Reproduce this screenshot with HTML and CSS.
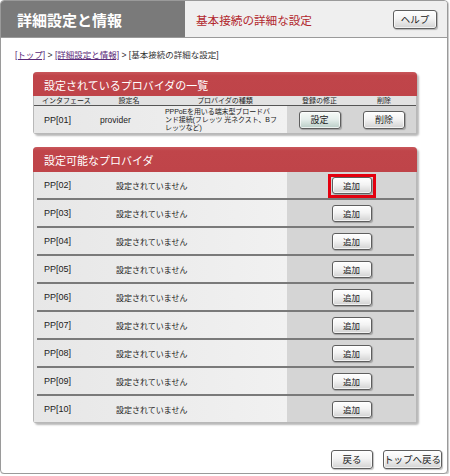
FILE: index.html
```html
<!DOCTYPE html>
<html lang="ja">
<head>
<meta charset="utf-8">
<link rel="stylesheet" href="styles.css">
</head>
<body>
<div class="frame">
  <div class="header">
    <div class="h-title">詳細設定と情報</div>
    <div class="h-sub">
      <span class="sub-text">基本接続の詳細な設定</span>
      <button class="btn help">ヘルプ</button>
    </div>
  </div>

  <div class="crumbs"><a class="lnk">[トップ]</a> &gt; <a class="lnk">[詳細設定と情報]</a> &gt; [基本接続の詳細な設定]</div>

  <section class="panel p1">
    <div class="panel-head">設定されているプロバイダの一覧</div>
    <div class="g1 head-row">
      <div class="hc hc-if">インタフェース</div>
      <div class="hc">設定名</div>
      <div class="hc">プロバイダの種類</div>
      <div class="hc">登録の修正</div>
      <div class="hc">削除</div>
    </div>
    <div class="g1 data-row">
      <div class="dc dc-if">PP[01]</div>
      <div class="dc dc-name">provider</div>
      <div class="dc dc-type">PPPoEを用いる端末型ブロードバ<br>ンド接続(フレッツ 光ネクスト、Bフ<br>レッツなど)</div>
      <div class="dc dc-act"><button class="btn b-mid b-green">設定</button></div>
      <div class="dc dc-act"><button class="btn b-mid">削除</button></div>
    </div>
  </section>

  <section class="panel p2">
    <div class="panel-head">設定可能なプロバイダ</div>
    <div class="row"><div class="r-if">PP[02]</div><div class="r-name">設定されていません</div><div class="r-act"><span class="focus"><button class="btn b-add">追加</button></span></div></div>
    <div class="sep"></div>
    <div class="row"><div class="r-if">PP[03]</div><div class="r-name">設定されていません</div><div class="r-act"><button class="btn b-add">追加</button></div></div>
    <div class="sep"></div>
    <div class="row"><div class="r-if">PP[04]</div><div class="r-name">設定されていません</div><div class="r-act"><button class="btn b-add">追加</button></div></div>
    <div class="sep"></div>
    <div class="row"><div class="r-if">PP[05]</div><div class="r-name">設定されていません</div><div class="r-act"><button class="btn b-add">追加</button></div></div>
    <div class="sep"></div>
    <div class="row"><div class="r-if">PP[06]</div><div class="r-name">設定されていません</div><div class="r-act"><button class="btn b-add">追加</button></div></div>
    <div class="sep"></div>
    <div class="row"><div class="r-if">PP[07]</div><div class="r-name">設定されていません</div><div class="r-act"><button class="btn b-add">追加</button></div></div>
    <div class="sep"></div>
    <div class="row"><div class="r-if">PP[08]</div><div class="r-name">設定されていません</div><div class="r-act"><button class="btn b-add">追加</button></div></div>
    <div class="sep"></div>
    <div class="row"><div class="r-if">PP[09]</div><div class="r-name">設定されていません</div><div class="r-act"><button class="btn b-add">追加</button></div></div>
    <div class="sep"></div>
    <div class="row"><div class="r-if">PP[10]</div><div class="r-name">設定されていません</div><div class="r-act"><button class="btn b-add">追加</button></div></div>
  </section>

  <div class="footer">
    <button class="btn b-back">戻る</button>
    <button class="btn b-top">トップへ戻る</button>
  </div>
</div>
</body>
</html>
```

FILE: styles.css
```css
* { box-sizing: border-box; }
html, body { margin: 0; padding: 0; background: #ffffff; }
body {
  font-family: "Liberation Sans", "Noto Sans CJK JP", sans-serif;
  color: #222;
}

.frame {
  width: 448px;
  height: 474px;
  border: 1px solid #9a9a9a;
  border-radius: 4px;
  box-shadow: 1px 1px 1px #c8c8c8;
  display: flex;
  flex-direction: column;
  overflow: hidden;
  background: #ffffff;
}

/* Header */
.header {
  display: flex;
  height: 37px;
  border-bottom: 1px solid #9a9a9a;
  flex-shrink: 0;
}
.h-title {
  width: 184px;
  background: #7a7a7a;
  color: #ffffff;
  font-family: "Noto Sans CJK JP", sans-serif;
  font-weight: 700;
  font-size: 15px;
  padding-left: 16px;
  display: flex;
  align-items: center;
  letter-spacing: 0;
}
.h-sub {
  flex: 1;
  background: #efefef;
  display: flex;
  align-items: center;
  justify-content: space-between;
  padding-left: 11px;
  padding-right: 10px;
}
.sub-text {
  font-family: "Noto Sans CJK JP", sans-serif;
  color: #b2282e;
  font-size: 11.6px;
  padding-top: 1px;
}

/* Buttons */
.btn {
  font-family: "Noto Sans CJK JP", sans-serif;
  color: #222;
  border: 1px solid #5e5e5e;
  border-radius: 3px;
  background: linear-gradient(#ffffff 0%, #f3f3f3 45%, #d2d2d2 100%);
  box-shadow: 1px 1px 1px rgba(0,0,0,0.25), inset 0 0 0 1px rgba(255,255,255,0.7);
  padding: 0;
  margin: 0;
  line-height: 1;
  display: inline-flex;
  align-items: center;
  justify-content: center;
}
.help { width: 44px; height: 19px; font-size: 9.5px; margin-top: 1px; }
.b-mid { width: 42px; height: 18px; font-size: 9px; }
.b-green { background: linear-gradient(#f6faf8 0%, #e6efec 45%, #b9cdc6 100%); }
.b-add { width: 40px; height: 17px; font-size: 8.5px; }
.b-back { width: 42px; height: 19px; font-size: 9.5px; }
.b-top { width: 59px; height: 19px; font-size: 9.5px; }

/* Breadcrumbs */
.crumbs {
  margin: 12px 0 0 14px;
  height: 10px;
  font-size: 8.5px;
  line-height: 10px;
  color: #333;
  white-space: nowrap;
}
.lnk { color: #5a2a78; text-decoration: underline; }

/* Panels */
.panel {
  margin-left: 32px;
  width: 384px;
  border: 1px solid #b8b8b8;
  border-top: none;
  border-radius: 4px 4px 3px 3px;
  box-shadow: 2px 2px 2px rgba(0,0,0,0.28);
  background: #dcdcdc;
  flex-shrink: 0;
}
.p1 { margin-top: 12px; }
.p2 { margin-top: 13px; }
.panel-head {
  margin: 0 -1px;
  background: linear-gradient(#c9575b 0%, #c0454a 15%, #bf4449 100%);
  color: #ffffff;
  font-family: "Noto Sans CJK JP", sans-serif;
  font-size: 11px;
  padding-left: 11px;
  border-radius: 4px 4px 0 0;
  display: flex;
  align-items: flex-end;
}
.p1 .panel-head { height: 24px; padding-bottom: 3px; }
.p2 .panel-head { height: 25px; padding-bottom: 4px; }

/* Panel 1 grid */
.g1 {
  display: grid;
  grid-template-columns: 61px 68px 124px 65px 64px;
}
.head-row {
  height: 10px;
  background: #e2e2e2;
  border-bottom: 1px solid #555555;
  font-family: "Noto Sans CJK JP", sans-serif;
  font-size: 7px;
  line-height: 9px;
  color: #222;
}
.hc { text-align: center; white-space: nowrap; }
.hc-if { text-align: left; padding-left: 8px; }
.data-row {
  height: 27px;
  font-size: 8.5px;
  background: linear-gradient(to right, #e7e7e7, #f1f1f1 253px, #d5d5d5 253px);
}
.dc { display: flex; align-items: center; }
.dc-if { padding-left: 10px; font-size: 9px; }
.dc-name { padding-left: 5px; font-size: 8.5px; }
.dc-type {
  padding-left: 2px;
  font-size: 7px;
  line-height: 8px;
  white-space: nowrap;
  letter-spacing: -0.1px;
}
.dc-act { justify-content: center; }

/* Panel 2 rows */
.row {
  display: grid;
  grid-template-columns: 76px 177px 129px;
  height: 26px;
  background: linear-gradient(to right, #e7e7e7, #f1f1f1 253px, #d5d5d5 253px);
}
.r-if { padding-left: 10px; font-size: 9px; display: flex; align-items: center; }
.r-name {
  padding-left: 6px;
  font-family: "Noto Sans CJK JP", sans-serif;
  font-size: 8px;
  display: flex;
  align-items: center;
}
.r-act { display: flex; align-items: center; justify-content: center; }
.focus {
  display: inline-flex;
  border: 3px solid #e4000f;
  padding: 0 1px 1px 1px;
  margin-top: 1px;
}
.sep {
  height: 2px;
  background: linear-gradient(to right, #e7e7e7 3px, #7a7a7a 3px, #7a7a7a 380px, #d5d5d5 380px);
}

/* Footer */
.footer {
  margin-top: auto;
  margin-bottom: 4px;
  display: flex;
  justify-content: flex-end;
  gap: 10px;
  padding-right: 5px;
}
```
